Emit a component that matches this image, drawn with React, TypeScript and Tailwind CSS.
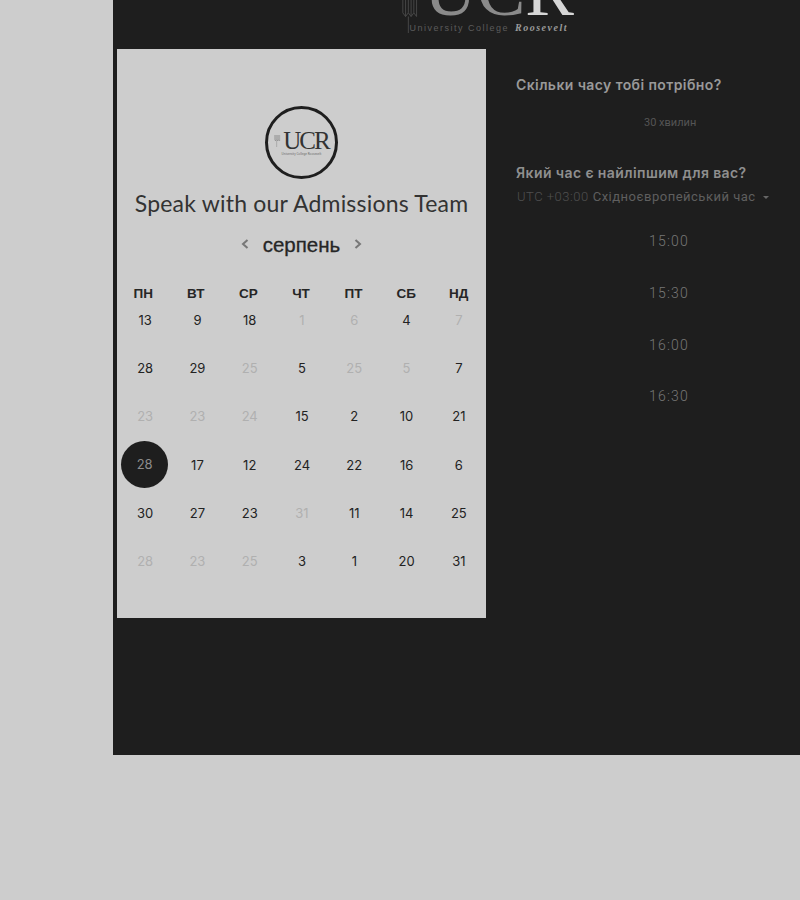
const weekDays = ["ПН", "ВТ", "СР", "ЧТ", "ПТ", "СБ", "НД"];

// [day, tone] tone: 0 = normal, 1 = disabled, 2 = selected
const days: [string, number][] = [
  ["13", 0], ["9", 0], ["18", 0], ["1", 1], ["6", 1], ["4", 0], ["7", 1],
  ["28", 0], ["29", 0], ["25", 1], ["5", 0], ["25", 1], ["5", 1], ["7", 0],
  ["23", 1], ["23", 1], ["24", 1], ["15", 0], ["2", 0], ["10", 0], ["21", 0],
  ["28", 2], ["17", 0], ["12", 0], ["24", 0], ["22", 0], ["16", 0], ["6", 0],
  ["30", 0], ["27", 0], ["23", 0], ["31", 1], ["11", 0], ["14", 0], ["25", 0],
  ["28", 1], ["23", 1], ["25", 1], ["3", 0], ["1", 0], ["20", 0], ["31", 0],
];

const times = ["15:00", "15:30", "16:00", "16:30"];

function Building({ className }: { className: string }) {
  return (
    <svg viewBox="0 0 24 36" fill="none" stroke="currentColor" strokeWidth="1" className={className}>
      <path d="M2 0v14M5 0v18M8 0v14M11 0v18M14 0v14M17 0v18" />
      <path d="M2 14l3 4 3-4 3 4 3-4 3 4" />
      <path d="M8 18v18" />
    </svg>
  );
}

function Header() {
  return (
    <header className="relative flex h-[49px] justify-center overflow-hidden pl-[62px]">
      <div className="relative flex w-[174px] flex-col items-center">
        <Building className="absolute left-0 top-0 h-[33px] w-[22px] text-[#4a4a4a]" />
        <div className="mt-[-39px] flex h-[60px] items-end pl-[23px] font-['Liberation_Serif',serif] text-[73px] leading-[60px]">
          <span className="text-[#8a8a8a]">UC</span>
          <span className="text-[#d6d6d6]">R</span>
        </div>
        <div className="flex w-full items-baseline gap-[6px] pl-[9px] text-[9px] leading-[14px]">
          <span className="font-['Liberation_Sans',sans-serif] tracking-[1.5px] text-[#5c5c5c]">University College</span>
          <span className="font-['Liberation_Serif',serif] text-[10px] font-bold italic tracking-[1.5px] text-[#9a9a9a]">Roosevelt</span>
        </div>
      </div>
    </header>
  );
}

function CalendarCard() {
  return (
    <section className="flex h-[569px] w-[369px] shrink-0 flex-col items-center bg-[#cdcdcd] pt-[57px]">
      <div className="flex h-[73px] w-[73px] flex-col items-center justify-center rounded-full border-[3px] border-[#1e1e1e]">
        <div className="flex items-center">
          <Building className="mr-[1px] h-[18px] w-[8px] text-[#666]" />
          <span className="font-['Liberation_Serif',serif] text-[25px] leading-[22px] tracking-[-2px] text-[#333]">UCR</span>
        </div>
        <span className="text-[3px] leading-[4px] text-[#666]">University College Roosevelt</span>
      </div>
      <h1 className="mt-[8px] font-['Lato',sans-serif] text-[23px] leading-[32px] tracking-[0.2px] text-[#333]">Speak with our Admissions Team</h1>
      <div className="mt-[12px] flex h-[28px] items-center gap-[14px]">
        <svg viewBox="0 0 8 10" fill="none" stroke="#777" strokeWidth="2" className="mb-[2px] h-[10px] w-[8px]">
          <path d="M6.5 1L2 5l4.5 4" />
        </svg>
        <span className="font-['Liberation_Sans',sans-serif] text-[20.5px] font-medium leading-[28px] text-[#262626] [-webkit-text-stroke:0.3px_#262626]">серпень</span>
        <svg viewBox="0 0 8 10" fill="none" stroke="#777" strokeWidth="2" className="mb-[2px] h-[10px] w-[8px]">
          <path d="M1.5 1L6 5 1.5 9" />
        </svg>
      </div>
      <div className="mt-[23px] grid w-full grid-cols-7 pr-[1px]">
        {weekDays.map((d) => (
          <div key={d} className="h-[24px] text-center font-['Liberation_Sans',sans-serif] text-[13.5px] font-bold leading-[24px] text-[#262626]">
            {d}
          </div>
        ))}
      </div>
      <div className="mt-[-10px] grid w-full grid-cols-7 grid-rows-[repeat(6,48.2px)] pl-[2px] pr-[1px]">
        {days.map(([day, tone], i) => (
          <div key={i} className="flex items-center justify-center font-['Inter',sans-serif] text-[13px] leading-[20px]">
            {tone === 2 ? (
              <span className="mb-[1px] mr-[1px] flex h-[47px] w-[47px] items-center justify-center rounded-full bg-[#1e1e1e] text-[#8c8c8c]">{day}</span>
            ) : tone === 1 ? (
              <span className="text-[#b0b0b0]">{day}</span>
            ) : (
              <span className="text-[#222]">{day}</span>
            )}
          </div>
        ))}
      </div>
    </section>
  );
}

function TimePanel() {
  return (
    <section className="flex min-w-0 flex-1 flex-col pl-[30px] pt-[26px] font-['Inter',sans-serif]">
      <h2 className="whitespace-nowrap text-[14px] font-semibold leading-[20px] tracking-[0.4px] text-[#999]">Скільки часу тобі потрібно?</h2>
      <div className="mt-[18px] h-[20px] pl-[128px] font-['Roboto',sans-serif] text-[11px] leading-[20px] text-[#555]">30 хвилин</div>
      <h2 className="mt-[30px] whitespace-nowrap text-[14px] font-semibold leading-[20px] tracking-[0.4px] text-[#8f8f8f]">Який час є найліпшим для вас?</h2>
      <div className="mt-[4px] flex h-[20px] items-center whitespace-nowrap pl-[1px] font-['Roboto',sans-serif] text-[13px] leading-[20px] tracking-[0.5px]">
        <span className="font-light text-[#4f4f4f]">UTC +03:00</span>
        <span className="ml-[4px] text-[#5f5f5f]">Східноєвропейський час</span>
        <span className="ml-[7px] mt-[1px] h-0 w-0 border-x-[3px] border-t-[3px] border-x-transparent border-t-[#666]" />
      </div>
      <div className="ml-[11px] mt-[8px] flex flex-col">
        {times.map((t) => (
          <div key={t} className="h-[51.8px] w-[284px] text-center font-['Roboto',sans-serif] text-[14px] font-light leading-[52px] tracking-[1.2px] text-[#777]">
            {t}
          </div>
        ))}
      </div>
    </section>
  );
}

export default function App() {
  return (
    <div className="min-h-[900px] overflow-hidden bg-[#cdcdcd] pl-[113px]">
      <main className="h-[755px] bg-[#1e1e1e]">
        <Header />
        <div className="flex pl-[4px]">
          <CalendarCard />
          <TimePanel />
        </div>
      </main>
    </div>
  );
}
